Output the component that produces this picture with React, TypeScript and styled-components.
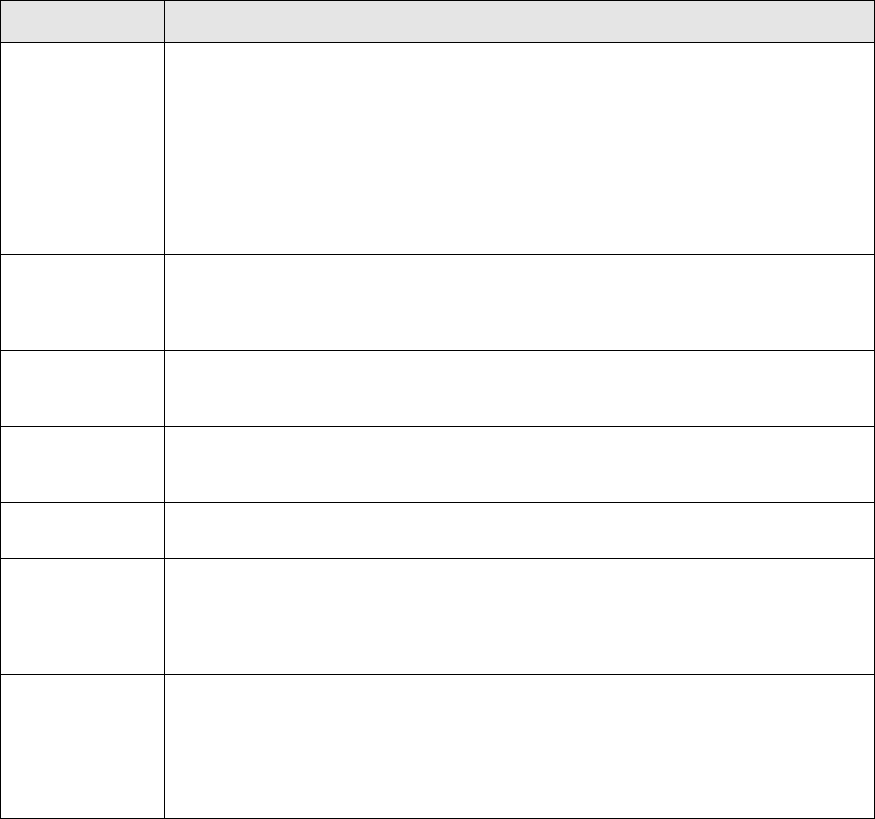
import React from "react";
import styled, { createGlobalStyle } from "styled-components";

const GlobalStyle = createGlobalStyle`
  html, body {
    margin: 0;
    padding: 0;
    background: #fff;
    font-family: "Liberation Sans", Arial, sans-serif;
    font-size: 13px;
    color: #000;
  }
  * { box-sizing: border-box; }
`;

// row heights measured line to line, bottom border included
const rowHeights = [212, 96, 76, 76, 56, 116, 144];

const Grid = styled.div`
  display: grid;
  grid-template-columns: 164px 710px;
  grid-template-rows: 42px ${rowHeights.map((h) => `${h}px`).join(" ")};
  width: 875px;
  border-left: 1px solid #000;
  border-top: 1px solid #000;
`;

const Cell = styled.div<{ $head?: boolean }>`
  border-right: 1px solid #000;
  border-bottom: 1px solid #000;
  background: ${(p) => (p.$head ? "#e5e5e5" : "#fff")};
  padding: 6px 8px;
  font-weight: ${(p) => (p.$head ? 700 : 400)};
`;

export default function App() {
  return (
    <>
      <GlobalStyle />
      <Grid role="table">
        <Cell $head role="columnheader" />
        <Cell $head role="columnheader" />
        {rowHeights.map((_, i) => (
          <React.Fragment key={i}>
            <Cell role="cell" />
            <Cell role="cell" />
          </React.Fragment>
        ))}
      </Grid>
    </>
  );
}
